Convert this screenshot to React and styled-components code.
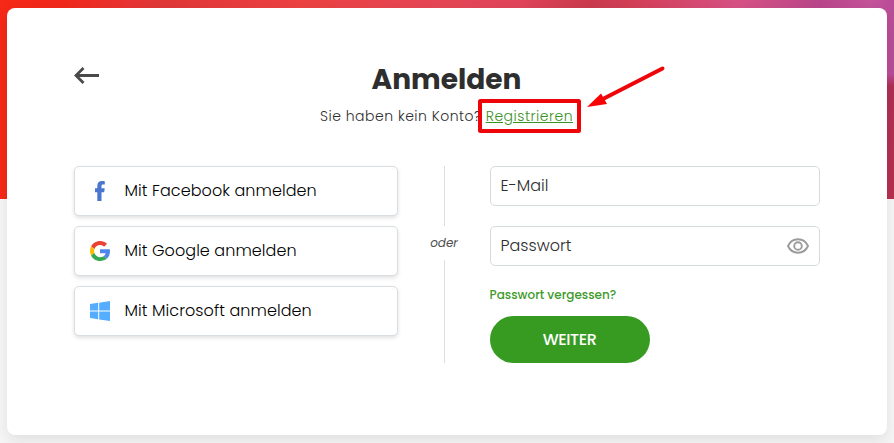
import React from "react";
import styled, { createGlobalStyle } from "styled-components";

const GlobalStyle = createGlobalStyle`
  * { box-sizing: border-box; }
  body { margin: 0; font-family: Poppins, Inter, sans-serif; color: #2e2e2e; }
`;

const Page = styled.main`
  height: 443px;
  padding: 8px 7px;
  overflow: hidden;
  background:
    linear-gradient(to bottom, transparent 74px, #b02f55 86px, #b8304e 199px) right top / 12px 199px no-repeat,
    linear-gradient(to right, #f62817 0, #f0281a 60px, #e93333 130px, #e03636 155px, #ec4141 300px, #e54655 440px, #e0445a 520px, #c93a4c 590px, #d4405a 640px, #d65285 740px, #b9458a 820px, #c4539a 870px, #b94c98 894px) left top / 100% 199px no-repeat,
    #f6f6f6;
`;

const Card = styled.section`
  position: relative;
  height: 427px;
  padding: 0 67px;
  border-radius: 8px;
  background: #fff;
  box-shadow: 0 6px 16px rgba(0, 0, 0, 0.09);
`;

const Header = styled.header`
  display: grid;
  grid-template-columns: 60px 1fr 60px;
  height: 158px;
  padding-top: 50px;
`;

const BackButton = styled.button`
  display: flex;
  align-items: flex-start;
  height: 30px;
  padding: 8px 0 0;
  border: 0;
  background: none;
`;

const Heading = styled.div`
  display: flex;
  flex-direction: column;
  align-items: center;
  padding-right: 1px;
`;

const Title = styled.h1`
  margin: 0;
  font-size: 28px;
  font-weight: 700;
  line-height: 44px;
`;

const Prompt = styled.p`
  display: flex;
  gap: 4px;
  margin: 3px 0 0;
  font-size: 14px;
  font-weight: 300;
  line-height: 22px;
  letter-spacing: 0.5px;
  white-space: nowrap;
`;

const RegisterLink = styled.a`
  color: #3a9125;
  text-decoration: underline;
`;

const Columns = styled.div`
  display: grid;
  grid-template-columns: 324px 92px 330px;
  height: 197px;
`;

const Providers = styled.div`
  display: flex;
  flex-direction: column;
  gap: 10px;
`;

const ProviderButton = styled.button`
  display: flex;
  align-items: center;
  gap: 14.5px;
  height: 50px;
  padding: 0 15px;
  border: 1px solid #d9dee2;
  border-radius: 5px;
  background: #fff;
  box-shadow: 0 2px 4px rgba(0, 0, 0, 0.12);
  color: #000;
  font: 300 16px Poppins, Inter, sans-serif;
  letter-spacing: 0.07px;

  svg { flex: none; }
  span { padding-bottom: 2px; }
`;

const Divider = styled.div`
  display: flex;
  flex-direction: column;
  align-items: center;
  padding-left: 1px;
  color: #505050;
  font-size: 12px;
  font-style: italic;
  line-height: 34px;

  &::before { content: ""; width: 1px; height: 60px; background: #dce0e2; }
  &::after { content: ""; width: 1px; flex: 1; background: #dce0e2; }
  span { margin-right: 1px; }
`;

const Form = styled.form`
  display: flex;
  flex-direction: column;
  align-items: flex-start;
`;

const Field = styled.label`
  display: flex;
  align-items: center;
  justify-content: space-between;
  width: 100%;
  height: 40px;
  margin-bottom: 20px;
  padding: 0 10px 0 9.5px;
  border: 1px solid #d5dddc;
  border-radius: 5px;
  font-size: 16px;
  font-weight: 300;

  span { padding-bottom: 2px; }
`;

const ForgotLink = styled.a`
  margin: 0 0 12px -0.5px;
  color: #409a2c;
  font-size: 12px;
  font-weight: 500;
  line-height: 18px;
`;

const Submit = styled.button`
  width: 160px;
  height: 47px;
  padding: 0 1px 0 0;
  border: 0;
  border-radius: 24px;
  background: #379b21;
  color: #fff;
  font: 500 16px Poppins, Inter, sans-serif;
  letter-spacing: -0.4px;
`;

const Callout = styled.svg`
  position: absolute;
  top: 52px;
  left: 468px;
  pointer-events: none;
`;

const ArrowIcon = () => (
  <svg width="26" height="18" viewBox="0 0 26 18" fill="none" stroke="#4a4a4a" strokeWidth="2.8">
    <path d="M25 9.5H2M9.5 2 2 9.5l7.5 7.4" />
  </svg>
);

const FacebookIcon = () => (
  <svg width="20" height="20" viewBox="0 0 20 20" fill="#4a76d0">
    <path d="M7.300 20v-8.700H5V7.300h2.300V5C7.300 1.800 9 0 12 0c1.200 0 2.400.1 2.800.2v3.400h-1.700c-1.300 0-1.600.7-1.600 1.600v2.100h3.200l-.5 4h-2.700V20Z" />
  </svg>
);

const GoogleIcon = () => (
  <svg width="20" height="20" viewBox="2 2 44 44">
    <path fill="#EA4335" d="M24 10.8c3.5 0 6.6 1.2 9.1 3.6l6.3-6.3C35.3 4.3 30 2 24 2 15.400 2 7.960 6.930 4.340 14.120l7.350 5.700C13.420 14.620 18.270 10.800 24 10.800z" />
    <path fill="#4F86EC" d="M46 24.500c0-1.600-.15-3.150-.4-4.500H24v8.800h12.400c-.54 2.800-2.160 5.200-4.600 6.800l7.100 5.500C43.100 37.300 46 31.400 46 24.500z" />
    <path fill="#FBBC05" d="M11.690 28.180A13.200 13.200 0 0 1 11.690 19.820l-7.350-5.700A22 22 0 0 0 4.340 33.880z" />
    <path fill="#34A853" d="M24 46c5.940 0 10.920-1.970 14.900-4.900l-7.100-5.500c-2 1.350-4.540 2.100-7.800 2.100-5.730 0-10.580-4.320-12.310-9.520l-7.350 5.700C7.960 41.070 15.400 46 24 46z" />
  </svg>
);

const WindowsIcon = () => (
  <svg width="20" height="20" viewBox="0 0 20 20" fill="#55adff">
    <path d="M0 3 8.200 1.800v7.700H0ZM9.200 1.650 20 0v9.500H9.200ZM0 10.500h8.200v7.700L0 17ZM9.200 10.500H20V20L9.200 18.400Z" />
  </svg>
);

const EyeIcon = () => (
  <svg width="22" height="16" viewBox="0 0 22 16" fill="none" stroke="#9b9b9b" strokeWidth="1.9">
    <path d="M1 8C3 3.600 6.600 1.300 11 1.300S19 3.600 21 8c-2 4.400-5.600 6.700-10 6.700S3 12.400 1 8Z" />
    <circle cx="11" cy="8" r="3.800" />
  </svg>
);

export default function App() {
  return (
    <Page>
      <GlobalStyle />
      <Card>
        <Header>
          <BackButton aria-label="Zurück"><ArrowIcon /></BackButton>
          <Heading>
            <Title>Anmelden</Title>
            <Prompt>
              <span>Sie haben kein Konto?</span>
              <RegisterLink>Registrieren</RegisterLink>
            </Prompt>
          </Heading>
        </Header>
        <Columns>
          <Providers>
            <ProviderButton><FacebookIcon /><span>Mit Facebook anmelden</span></ProviderButton>
            <ProviderButton><GoogleIcon /><span>Mit Google anmelden</span></ProviderButton>
            <ProviderButton><WindowsIcon /><span>Mit Microsoft anmelden</span></ProviderButton>
          </Providers>
          <Divider><span>oder</span></Divider>
          <Form>
            <Field><span>E-Mail</span></Field>
            <Field><span>Passwort</span><EyeIcon /></Field>
            <ForgotLink>Passwort vergessen?</ForgotLink>
            <Submit type="button">WEITER</Submit>
          </Form>
        </Columns>
        <Callout width="194" height="78" viewBox="0 0 194 78">
          <rect x="5" y="41" width="99" height="30" rx="0.500" fill="none" stroke="#ed0509" strokeWidth="4" />
          <path d="M187.500 8.500 124 41" stroke="#ed0509" strokeWidth="4" strokeLinecap="round" />
          <path d="M112 47 126 33.500l6 10.500Z" fill="#fa0204" />
        </Callout>
      </Card>
    </Page>
  );
}
